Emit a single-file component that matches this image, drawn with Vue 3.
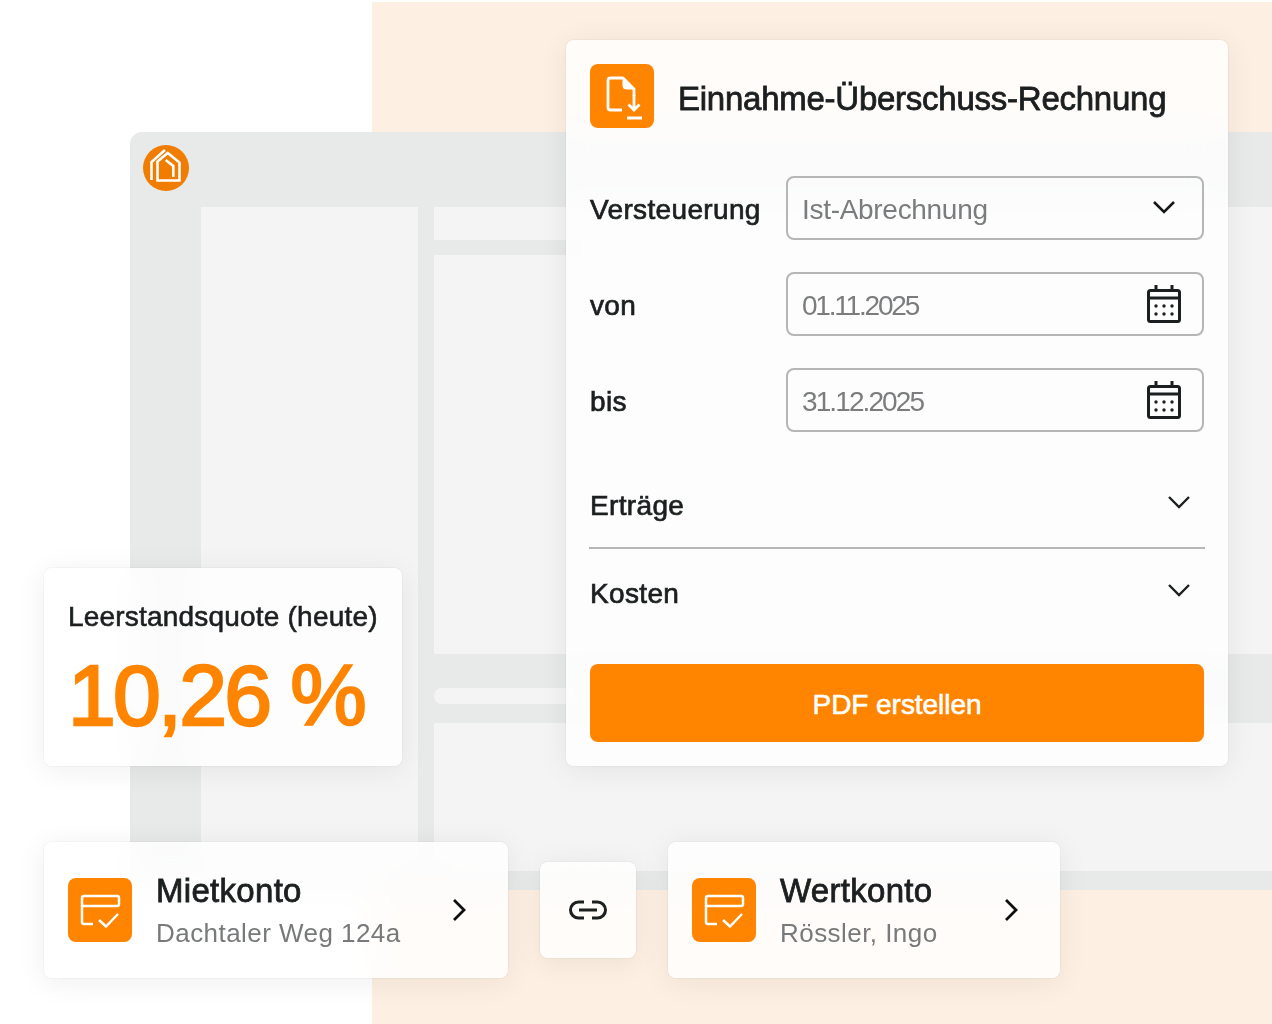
<script setup>
const fields = [
  { label: 'von', value: '01.11.2025', spacing: -2.2 },
  { label: 'bis', value: '31.12.2025', spacing: -1.9 }
]

const accounts = [
  { name: 'Mietkonto', detail: 'Dachtaler Weg 124a', cls: 'account-left' },
  { name: 'Wertkonto', detail: 'Rössler, Ingo', cls: 'account-right' }
]
</script>

<template>
  <div class="stage">
    <div class="peach"></div>

    <div class="window">
      <div class="topbar">
        <svg class="logo" viewBox="0 0 46 46" width="46" height="46" fill="none" stroke="#fff" stroke-width="2.600">
          <circle cx="23" cy="23" r="23" fill="#f07d00" stroke="none" />
          <path d="M14.500 35.500V16.500L24.700 8L36.500 17.500V35.500H14.500Z" />
          <path d="M8.500 35V17L22 5" />
          <path d="M22.700 15L30.300 21V32" />
        </svg>
      </div>
      <div class="body">
        <div class="side"></div>
        <div class="panel-left"></div>
        <div class="content">
          <div class="block block-top">
            <div class="strip"></div>
          </div>
          <div class="pill"></div>
          <div class="block block-bottom"></div>
        </div>
      </div>
    </div>

    <section class="card report">
      <header class="report-head">
        <span class="tile">
          <svg viewBox="0 0 64 64" width="64" height="64" fill="none" stroke="#fff" stroke-width="2.800">
            <path d="M32 46H20.500Q18 46 18 43.500V16.500Q18 14 20.500 14H33L44 25V32" stroke-linejoin="round" />
            <path d="M33 14L44 25H36Q33 25 33 22Z" fill="#fff" stroke-width="1" />
            <path d="M44 31V46M38.500 40.500L44 46L49.500 40.500M37 54H52" />
          </svg>
        </span>
        <h1>Einnahme-Überschuss-Rechnung</h1>
      </header>

      <div class="form">
        <label class="row">
          <span class="label">Versteuerung</span>
          <span class="input">
            <span class="value">Ist-Abrechnung</span>
            <svg class="input-icon" viewBox="0 0 36 36" width="36" height="36" fill="none" stroke="#141617" stroke-width="2.600">
              <path d="M8 12L18 22L28 12" />
            </svg>
          </span>
        </label>
        <label v-for="field in fields" :key="field.label" class="row">
          <span class="label">{{ field.label }}</span>
          <span class="input">
            <span class="value" :style="{ letterSpacing: field.spacing + 'px' }">{{ field.value }}</span>
            <svg class="input-icon" viewBox="0 0 36 40" width="36" height="40" fill="none" stroke="#1c1f20" stroke-width="3">
              <rect x="2.500" y="6.500" width="31" height="31" rx="2" />
              <path d="M2.500 14H33.500" />
              <path d="M10 1V6.500M26 1V6.500" />
              <g fill="#1c1f20" stroke="none">
                <circle cx="10" cy="22" r="1.700" />
                <circle cx="18" cy="22" r="1.700" />
                <circle cx="26" cy="22" r="1.700" />
                <circle cx="10" cy="30" r="1.700" />
                <circle cx="18" cy="30" r="1.700" />
                <circle cx="26" cy="30" r="1.700" />
              </g>
            </svg>
          </span>
        </label>
      </div>

      <div class="fold fold-first">
        <span class="label">Erträge</span>
        <svg viewBox="0 0 36 36" width="36" height="36" fill="none" stroke="#1c1f20" stroke-width="2.400">
          <path d="M8 10L18 20L28 10" />
        </svg>
      </div>
      <div class="fold">
        <span class="label">Kosten</span>
        <svg viewBox="0 0 36 36" width="36" height="36" fill="none" stroke="#1c1f20" stroke-width="2.400">
          <path d="M8 10L18 20L28 10" />
        </svg>
      </div>

      <button class="create">PDF erstellen</button>
    </section>

    <section class="card vacancy">
      <p class="vacancy-label">Leerstandsquote (heute)</p>
      <p class="vacancy-value">10,26 %</p>
    </section>

    <section v-for="acc in accounts" :key="acc.name" class="card account" :class="acc.cls">
      <span class="tile">
        <svg viewBox="0 0 64 64" width="64" height="64" fill="none" stroke="#fff" stroke-width="2.500">
          <path d="M25 46H16Q14 46 14 44V20Q14 18 16 18H49Q51 18 51 20V26Q51 28 49 28H14" />
          <path d="M31 42L38 48.500L50 36" />
        </svg>
      </span>
      <div class="account-text">
        <strong>{{ acc.name }}</strong>
        <span>{{ acc.detail }}</span>
      </div>
      <svg class="arrow" viewBox="0 0 20 28" width="20" height="28" fill="none" stroke="#0d0f10" stroke-width="2.800">
        <path d="M5 4L15 14L5 24" />
      </svg>
    </section>

    <section class="card link">
      <svg viewBox="0 0 40 24" width="40" height="24" fill="none" stroke="#1c1f20" stroke-width="3">
        <path d="M16 4H10.500A8 8 0 0 0 10.500 20H16M24 4H29.500A8 8 0 0 1 29.500 20H24M11 12H29" />
      </svg>
    </section>
  </div>
</template>

<style>
body {
  background: #fff;
}
</style>

<style scoped>
.stage {
  position: relative;
  width: 1272px;
  height: 1024px;
  overflow: hidden;
  background: #fff;
  font-family: "Liberation Sans", Arial, sans-serif;
  color: #1c1f20;
}

/* background layers of the collage */
.peach {
  position: absolute;
  left: 372px;
  top: 2px;
  right: 0;
  bottom: 0;
  background: #fdefe1;
}

.window {
  position: absolute;
  left: 130px;
  top: 132px;
  right: 0;
  height: 758px;
  display: flex;
  flex-direction: column;
  background: #e8e9e9;
  border-top-left-radius: 12px;
}

.topbar {
  height: 75px;
  padding: 13px 13px 0;
  box-sizing: border-box;
}

.logo {
  display: block;
}

.body {
  display: flex;
  height: 664px;
}

.side {
  width: 71px;
}

.panel-left {
  width: 217px;
  background: #f4f4f4;
}

.content {
  flex: 1;
  margin-left: 16px;
}

.block {
  background: #f4f4f4;
}

.block-top {
  height: 447px;
  padding-top: 33px;
  box-sizing: border-box;
}

/* the grey strip and the pill both end behind the report card */
.strip {
  width: 600px;
  height: 15px;
  background: #e8e9e9;
}

.pill {
  width: 600px;
  height: 16px;
  margin-top: 34px;
  border-radius: 8px;
  background: #f4f4f4;
}

.block-bottom {
  height: 148px;
  margin-top: 19px;
}

/* floating cards */
.card {
  position: absolute;
  box-sizing: border-box;
  border-radius: 8px;
  background: rgba(255, 255, 255, 0.82);
  backdrop-filter: blur(18px);
  box-shadow: 0 0 2px rgba(28, 31, 32, 0.12), 0 4px 30px rgba(28, 31, 32, 0.07);
}

.tile {
  display: block;
  flex: none;
  width: 64px;
  height: 64px;
  border-radius: 8px;
  background: #ff8400;
}

.tile svg {
  display: block;
}

.report {
  left: 566px;
  top: 40px;
  width: 662px;
  height: 726px;
  padding: 24px;
  display: flex;
  flex-direction: column;
}

.report-head {
  display: flex;
  align-items: center;
  gap: 24px;
}

.report-head h1 {
  margin: 0;
  padding-top: 5px;
  font-size: 33px;
  font-weight: 400;
  letter-spacing: -0.25px;
  -webkit-text-stroke: 0.8px currentColor;
}

.form {
  margin-top: 48px;
  display: flex;
  flex-direction: column;
  gap: 32px;
}

.row {
  display: grid;
  grid-template-columns: 196px 418px;
  align-items: center;
}

.label {
  padding-top: 4px;
  font-size: 28px;
  letter-spacing: 0.35px;
  -webkit-text-stroke: 0.7px currentColor;
}

.input {
  height: 64px;
  box-sizing: border-box;
  padding: 0 20px 0 14px;
  display: flex;
  align-items: center;
  justify-content: space-between;
  border: 2px solid #b5b6b6;
  border-radius: 8px;
}

.value {
  padding-top: 4px;
  font-size: 28px;
  letter-spacing: -0.3px;
  color: #7a7c7d;
}

.input-icon {
  display: block;
}

.fold {
  height: 88px;
  display: flex;
  align-items: center;
  justify-content: space-between;
  padding: 0 7px 0 0;
  box-sizing: border-box;
}

.fold .label {
  padding-top: 2px;
}

.fold-first {
  margin-top: 29px;
  border-bottom: 2px solid #b5b6b6;
  width: 616px;
  margin-left: -1px;
  padding: 2px 8px 0 1px;
}

.create {
  margin-top: 27px;
  height: 78px;
  padding: 4px 0 0;
  border: 0;
  border-radius: 8px;
  background: #ff8400;
  color: #fff;
  font-family: inherit;
  font-size: 28px;
  letter-spacing: -0.05px;
  -webkit-text-stroke: 0.6px currentColor;
}

.vacancy {
  left: 44px;
  top: 568px;
  width: 358px;
  height: 198px;
  padding: 32px 24px 0;
}

.vacancy-label {
  margin: 0;
  font-size: 28px;
  line-height: 34px;
  letter-spacing: 0.2px;
  -webkit-text-stroke: 0.6px currentColor;
}

.vacancy-value {
  margin: 11px 0 0;
  font-size: 86px;
  line-height: 100px;
  letter-spacing: -2.800px;
  color: #ff8400;
  -webkit-text-stroke: 2.400px currentColor;
}

.account {
  top: 842px;
  height: 136px;
  padding: 0 39px 0 24px;
  display: flex;
  align-items: center;
}

.account-left {
  left: 44px;
  width: 464px;
}

.account-right {
  left: 668px;
  width: 392px;
}

.account-text {
  flex: 1;
  margin-left: 24px;
  padding-top: 2px;
  display: flex;
  flex-direction: column;
  gap: 6px;
}

.account-text strong {
  font-size: 33px;
  line-height: 38px;
  font-weight: 400;
  letter-spacing: 0.3px;
  -webkit-text-stroke: 0.8px currentColor;
}

.account-text span {
  font-size: 26px;
  line-height: 34px;
  letter-spacing: 0.45px;
  color: #77797a;
}

.arrow {
  display: block;
}

.link {
  left: 540px;
  top: 862px;
  width: 96px;
  height: 96px;
  display: flex;
  align-items: center;
  justify-content: center;
}
</style>
